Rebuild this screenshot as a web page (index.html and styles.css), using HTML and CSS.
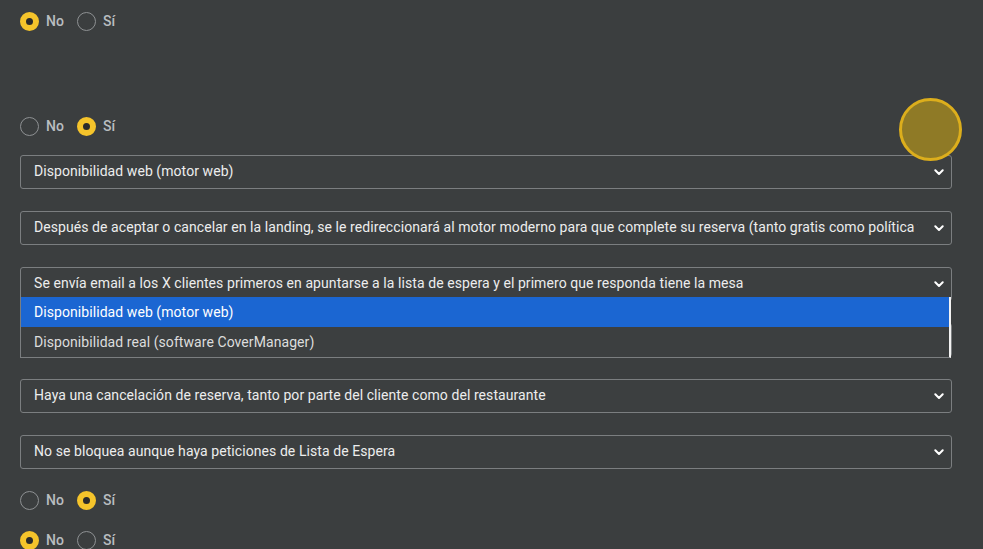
FILE: index.html
```html
<!DOCTYPE html>
<html lang="es">
<head>
<meta charset="utf-8">
<title>Lista de espera</title>
<link rel="stylesheet" href="styles.css">
</head>
<body>
<main class="form">
  <div class="radios r1">
    <label class="opt"><span class="dot on"></span>No</label>
    <label class="opt"><span class="dot"></span>Sí</label>
  </div>

  <div class="radios r2">
    <label class="opt"><span class="dot"></span>No</label>
    <label class="opt"><span class="dot on"></span>Sí</label>
  </div>

  <div class="selects">
    <div class="select"><span class="val">Disponibilidad web (motor web)</span><svg class="chev" viewBox="0 0 10 7"><path d="M1.3 1.3 5 5l3.7-3.7"/></svg></div>
    <div class="select"><span class="val">Después de aceptar o cancelar en la landing, se le redireccionará al motor moderno para que complete su reserva (tanto gratis como política y prepago)</span><svg class="chev" viewBox="0 0 10 7"><path d="M1.3 1.3 5 5l3.7-3.7"/></svg></div>
    <div class="select-wrap">
      <div class="select"><span class="val">Se envía email a los X clientes primeros en apuntarse a la lista de espera y el primero que responda tiene la mesa</span><svg class="chev" viewBox="0 0 10 7"><path d="M1.3 1.3 5 5l3.7-3.7"/></svg></div>
      <ul class="menu">
        <li class="active">Disponibilidad web (motor web)</li>
        <li>Disponibilidad real (software CoverManager)</li>
      </ul>
    </div>
    <div class="select"><span class="val"></span><svg class="chev" viewBox="0 0 10 7"><path d="M1.3 1.3 5 5l3.7-3.7"/></svg></div>
    <div class="select"><span class="val">Haya una cancelación de reserva, tanto por parte del cliente como del restaurante</span><svg class="chev" viewBox="0 0 10 7"><path d="M1.3 1.3 5 5l3.7-3.7"/></svg></div>
    <div class="select"><span class="val">No se bloquea aunque haya peticiones de Lista de Espera</span><svg class="chev" viewBox="0 0 10 7"><path d="M1.3 1.3 5 5l3.7-3.7"/></svg></div>
  </div>

  <div class="radios r3">
    <label class="opt"><span class="dot"></span>No</label>
    <label class="opt"><span class="dot on"></span>Sí</label>
  </div>

  <div class="radios r4">
    <label class="opt"><span class="dot on"></span>No</label>
    <label class="opt"><span class="dot"></span>Sí</label>
  </div>
</main>
<div class="cursor"></div>
</body>
</html>
```

FILE: styles.css
```css
* { box-sizing: border-box; }
html, body { margin: 0; padding: 0; }
body {
  width: 983px;
  height: 549px;
  overflow: hidden;
  background: #3b3e3f;
  font-family: Roboto, "Liberation Sans", sans-serif;
  font-size: 14px;
  letter-spacing: 0.07px;
  color: #e9eaea;
  position: relative;
}
.form {
  padding: 11px 31px 0 20px;
  display: flex;
  flex-direction: column;
}
.radios {
  display: flex;
  align-items: center;
  height: 20px;
  gap: 13px;
}
.r2 { margin-top: 85px; }
.r3 { margin-top: 21px; }
.r4 { margin-top: 20px; }
.opt {
  display: flex;
  align-items: center;
  gap: 7px;
  color: #b9bdc0;
  font-weight: 500;
  line-height: 20px;
}
.dot {
  width: 19px;
  height: 19px;
  border-radius: 50%;
  border: 1px solid #8e9193;
  flex: none;
}
.dot.on {
  border: 6px solid #f5c42b;
  background: #2b2b2b;
}
.selects {
  margin-top: 19px;
  display: flex;
  flex-direction: column;
  gap: 22px;
}
.select {
  height: 34px;
  border: 1px solid #7b7e80;
  border-radius: 3px;
  background: #3c3f40;
  display: flex;
  align-items: center;
  padding: 0 7px 0 13px;
  gap: 16px;
}
.val {
  flex: 1;
  white-space: nowrap;
  overflow: hidden;
  color: #eceded;
  line-height: 18px;
  margin-top: -2px;
}
.chev {
  width: 10px;
  height: 7px;
  flex: none;
  fill: none;
  stroke: #ffffff;
  stroke-width: 2;
  stroke-linecap: round;
  stroke-linejoin: round;
}
.select-wrap { position: relative; }
.menu {
  position: absolute;
  left: 0;
  top: 30px;
  width: 931px;
  margin: 0;
  padding: 0;
  list-style: none;
  background: #3c3f40;
  border: 1px solid #7b7e80;
  border-right: 2px solid #f2f2f2;
  border-top: none;
  z-index: 2;
}
.menu li {
  height: 30px;
  line-height: 30px;
  padding-left: 13px;
  color: #dcdddd;
}
.menu li.active {
  background: #1b66d2;
  color: #ffffff;
}
.cursor {
  position: absolute;
  left: 899px;
  top: 98px;
  width: 63px;
  height: 63px;
  border-radius: 50%;
  background: #8f7a26;
  border: 3px solid #dcae1c;
  z-index: 3;
}
```
